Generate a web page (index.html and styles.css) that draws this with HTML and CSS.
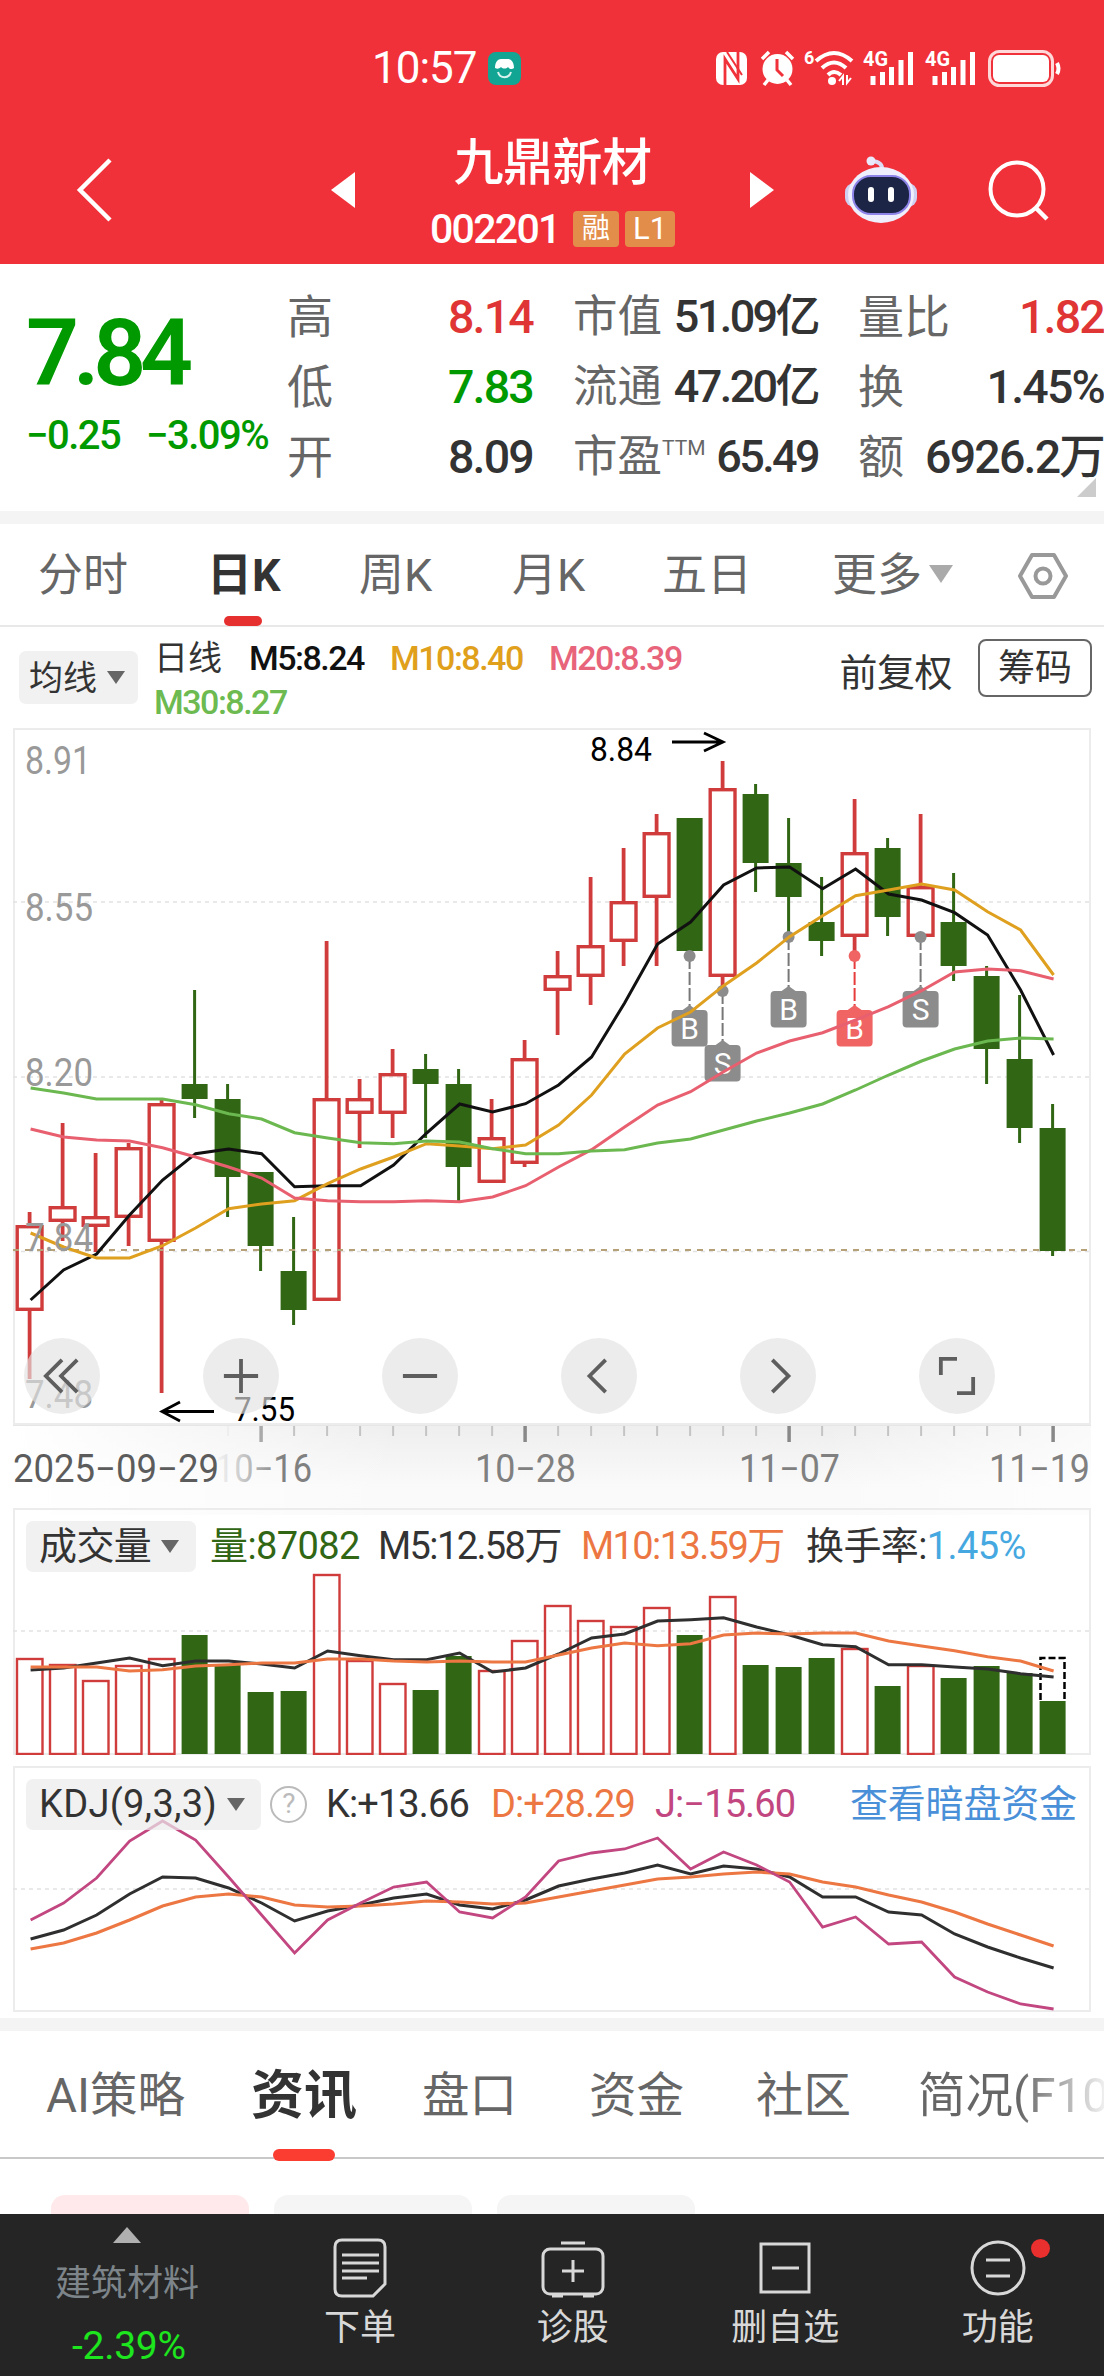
FILE: index.html
```html
<!DOCTYPE html>
<html lang="zh-CN">
  <head>
    <meta charset="UTF-8" />
    <meta name="viewport" content="width=device-width, initial-scale=1.0" />
    <title>九鼎新材 002201</title>
    <link rel="stylesheet" href="styles.css">
  </head>
  <body>
    <div class="app">
      <header class="header">
        <div class="status-bar">
          <span class="clock">10:57</span>
          <svg class="status-app" width="33" height="33" viewBox="0 0 33 33">
            <rect width="33" height="33" rx="8" fill="#12a594" />
            <path d="M7 16c0-6 3-9 6-9h7c3 0 6 3 6 9-2 2-5 1-6-1-2 2-5 2-7 0-2 2-4 2-6 1z" fill="#fff" />
            <path d="M10 20c2 7 11 7 13 0" fill="none" stroke="#d9f4ef" stroke-width="2" />
          </svg>
          <svg class="status-icons" width="346" height="42" viewBox="715 46 346 42">
            <!-- NFC -->
            <rect x="716" y="51" width="31" height="33" rx="7" fill="#fff" />
            <path d="M725 84V58l13 20V51" fill="none" stroke="#f13139" stroke-width="2.800" />
            <path d="M727 51l15 23" stroke="#f13139" stroke-width="2" />
            <!-- alarm -->
            <circle cx="777.500" cy="68" r="15" fill="#fff" />
            <path d="M762 58l7-7M793 58l-7-7M768 79l-4 5M787 79l4 5" stroke="#fff" stroke-width="3.500" />
            <path d="M777 58v11l6 6" fill="none" stroke="#f13139" stroke-width="3" />
            <!-- wifi -->
            <text x="804" y="63" class="tiny" font-size="18">6</text>
            <path d="M816 60q18-16 36 0M822 67q12-11 24 0M828 74q6-6 13 0" fill="none" stroke="#fff" stroke-width="4" />
            <circle cx="832" cy="80" r="4" fill="#fff" />
            <path d="M839 80l4-5v9M851 77l-4 5v-8" fill="none" stroke="#fff" stroke-width="2" />
            <!-- signal -->
            <text x="863" y="65" class="tiny" font-size="20" textLength="25" lengthAdjust="spacingAndGlyphs">4G</text>
            <path d="M873 75v9M882.500 71v13M891.500 66v18M901 59v25M910.500 51v33" stroke="#fff" stroke-width="5" />
            <text x="925" y="65" class="tiny" font-size="20" textLength="25" lengthAdjust="spacingAndGlyphs">4G</text>
            <path d="M935 75v9M944.500 71v13M953.500 66v18M963 59v25M972.500 51v33" stroke="#fff" stroke-width="5" />
            <!-- battery -->
            <rect x="989.500" y="50.500" width="63" height="34" rx="10" fill="none" stroke="#ffd9da" stroke-width="3" />
            <rect x="993" y="54" width="56" height="27" rx="6" fill="#fff" />
            <path d="M1057 62q3 5.500 0 11" fill="none" stroke="#fff" stroke-width="4" />
          </svg>
        </div>
        <div class="nav-bar">
          <svg class="nav-back" width="40" height="68" viewBox="0 0 40 68">
            <path d="M35 4L5 34l30 30" fill="none" stroke="#fff" stroke-width="4.500" />
          </svg>
          <svg class="nav-prev" width="24" height="36" viewBox="0 0 24 36"><path d="M24 0v36L0 18z" fill="#fff" /></svg>
          <div class="stock">
            <div class="stock-name">九鼎新材</div>
            <div class="stock-code">
              <span class="code">002201</span><span class="tag tag-rong">融</span><span class="tag tag-level">L1</span>
            </div>
          </div>
          <svg class="nav-next" width="24" height="36" viewBox="0 0 24 36"><path d="M0 0v36l24-18z" fill="#fff" /></svg>
          <svg class="nav-robot" width="74" height="68" viewBox="0 0 74 68">
            <path d="M38 14q1-8-10-9" fill="none" stroke="#dcdcf5" stroke-width="4" />
            <circle cx="27" cy="5" r="4.500" fill="#e9e9fb" />
            <rect x="1" y="27" width="72" height="24" rx="9" fill="#cfcff2" />
            <ellipse cx="37" cy="39" rx="33" ry="28" fill="#eeeefc" />
            <rect x="9" y="20" width="57" height="38" rx="18" fill="#1d2547" stroke="#8d83e8" stroke-width="2" />
            <rect x="24" y="31" width="6" height="15" rx="3" fill="#fff" />
            <rect x="44" y="31" width="6" height="15" rx="3" fill="#fff" />
          </svg>
          <svg class="nav-search" width="62" height="62" viewBox="0 0 62 62">
            <circle cx="29" cy="30" r="26.500" fill="none" stroke="#fff" stroke-width="4" />
            <path d="M48 49l11 11" stroke="#fff" stroke-width="4.500" />
          </svg>
        </div>
      </header>

      <section class="quote">
        <div class="price-box">
          <div class="price">7.84</div>
          <div class="change"><span>−0.25</span><span>−3.09%</span></div>
        </div>
        <div class="stats">
          <div class="stat"><label>高</label><b class="up">8.14</b></div>
          <div class="stat tight"><label>市值</label><b>51.09亿</b></div>
          <div class="stat"><label>量比</label><b class="up">1.82</b></div>
          <div class="stat"><label>低</label><b class="down">7.83</b></div>
          <div class="stat tight"><label>流通</label><b>47.20亿</b></div>
          <div class="stat"><label>换</label><b>1.45%</b></div>
          <div class="stat"><label>开</label><b>8.09</b></div>
          <div class="stat tight"><label>市盈<sup>TTM</sup></label><b>65.49</b></div>
          <div class="stat"><label>额</label><b>6926.2万</b></div>
        </div>
        <i class="corner"></i>
      </section>

      <nav class="period-tabs">
        <span>分时</span>
        <span class="active">日K</span>
        <span>周K</span>
        <span>月K</span>
        <span>五日</span>
        <span>更多<i class="caret caret-light"></i></span>
        <svg width="50" height="48" viewBox="0 0 50 48">
          <path d="M14 3h22l12 21-12 21H14L2 24z" fill="none" stroke="#999" stroke-width="4" stroke-linejoin="round" />
          <circle cx="25" cy="24" r="7.500" fill="none" stroke="#999" stroke-width="4" />
        </svg>
      </nav>

      <div class="ma-row">
        <span class="pill ma-pill">均线<i class="caret"></i></span>
        <div class="ma-values">
          <span class="ma-title">日线</span>
          <span class="ma5">M5:8.24</span>
          <span class="ma10">M10:8.40</span>
          <span class="ma20">M20:8.39</span>
          <span class="ma30">M30:8.27</span>
        </div>
        <span class="adjust">前复权</span>
        <span class="chips-btn">筹码</span>
      </div>

      <div class="panel kline">
        <svg id="kline" width="1078" height="697" viewBox="13 728 1078 697"></svg>
        <div class="chart-tools">
          <span><svg viewBox="0 0 40 40"><path d="M20 3L3 20l17 17M36 3L19 20l17 17" /></svg></span>
          <span><svg viewBox="0 0 40 40"><path d="M20 2v36M2 20h36" /></svg></span>
          <span><svg viewBox="0 0 40 40"><path d="M2 20h36" /></svg></span>
          <span><svg viewBox="0 0 40 40"><path d="M27 3L10 20l17 17" /></svg></span>
          <span><svg viewBox="0 0 40 40"><path d="M14 3l17 17-17 17" /></svg></span>
          <span><svg viewBox="0 0 40 40"><path d="M3 19V2h17M37 21v17H20" /></svg></span>
        </div>
      </div>
      <div class="axis">
        <svg id="axis" width="1078" height="90" viewBox="13 1425 1078 90"></svg>
      </div>

      <div class="panel volume">
        <svg id="volume" width="1078" height="247" viewBox="13 1508 1078 247"></svg>
        <div class="legend vol-legend">
          <span class="pill">成交量<i class="caret"></i></span>
          <span class="vol">量:87082</span>
          <span class="narrow">M5:12.58万</span>
          <span class="orange narrow">M10:13.59万</span>
          <span>换手率:<em>1.45%</em></span>
        </div>
      </div>

      <div class="panel kdj">
        <svg id="kdj" width="1078" height="246" viewBox="13 1766 1078 246"></svg>
        <div class="legend kdj-legend">
          <span class="pill">KDJ(9,3,3)<i class="caret"></i></span>
          <span class="help">?</span>
          <span>K:+13.66</span>
          <span class="orange">D:+28.29</span>
          <span class="purple">J:−15.60</span>
          <a class="dark-link">查看暗盘资金</a>
        </div>
      </div>

      <nav class="info-tabs">
        <span>AI策略</span>
        <span class="active">资讯</span>
        <span>盘口</span>
        <span>资金</span>
        <span>社区</span>
        <span class="faded">简况(F10)</span>
      </nav>
      <div class="chips"><i class="on"></i><i></i><i></i></div>

      <footer class="bottom-bar">
        <div class="sector">
          <i class="caret-up"></i>
          <span class="sector-name">建筑材料</span>
          <span class="sector-change">-2.39%</span>
        </div>
        <div class="action">
          <svg width="66" height="60" viewBox="0 0 66 60">
            <path d="M15 2h36q7 0 7 7v37L46 58H15q-7 0-7-7V9q0-7 7-7z" />
            <path d="M15 17h37M15 25h37M15 33h37M15 40h25" />
          </svg>
          <span>下单</span>
        </div>
        <div class="action">
          <svg width="66" height="60" viewBox="0 0 66 60">
            <rect x="3" y="11" width="60" height="45" rx="7" />
            <path d="M21 5h24M22 33h22M33 22v22M12 58h11M43 58h11" />
          </svg>
          <span>诊股</span>
        </div>
        <div class="action">
          <svg width="66" height="60" viewBox="0 0 66 60">
            <rect x="9" y="6" width="48" height="48" />
            <path d="M20 30h27" />
          </svg>
          <span>删自选</span>
        </div>
        <div class="action">
          <svg width="66" height="60" viewBox="0 0 66 60">
            <circle cx="33" cy="30" r="26" />
            <path d="M21 22h24M21 38h24" />
          </svg>
          <span>功能</span>
          <i class="badge"></i>
        </div>
      </footer>
    </div>
    <script src="chart.js"></script>
  </body>
</html>
```

FILE: styles.css
```css
* {
  box-sizing: border-box;
}

body {
  margin: 0;
  background: #fff;
  color: #333;
  font-family: Roboto, "Noto Sans CJK SC", sans-serif;
}

i,
em,
b {
  font-style: normal;
}

svg {
  display: block;
  flex: none;
}

.app {
  position: relative;
  width: 1104px;
  height: 2376px;
  overflow: hidden;
  display: flex;
  flex-direction: column;
}

.app > * {
  flex: none;
}

/* header */
.header {
  height: 264px;
  background: #f13139;
  color: #fff;
}

.status-bar {
  display: flex;
  align-items: center;
  height: 102px;
  padding: 34px 43px 0 372px;
}

.clock {
  width: 116px;
  font-size: 44px;
  font-weight: 400;
  letter-spacing: -1px;
}

.status-icons {
  margin-left: auto;
}

.tiny {
  fill: #fff;
  font-weight: 700;
}

.nav-bar {
  display: flex;
  align-items: center;
  height: 162px;
  padding: 14px 54px 0 75px;
}

.nav-prev {
  margin-left: 216px;
}

.stock {
  width: 395px;
  height: 148px;
  padding-top: 11px;
  text-align: center;
}

.stock-name {
  font-size: 50px;
  font-weight: 500;
  line-height: 72px;
  letter-spacing: -0.5px;
}

.stock-code {
  display: flex;
  align-items: center;
  height: 60px;
  padding-left: 75px;
}

.code {
  width: 143px;
  text-align: left;
  font-size: 41px;
  font-weight: 500;
  letter-spacing: -1.7px;
}

.tag {
  height: 36px;
  line-height: 36px;
  border-radius: 4px;
  background: #e38d4a;
  font-size: 28px;
}

.tag-rong {
  width: 46px;
}

.tag-level {
  width: 50px;
  margin-left: 6px;
  font-size: 31px;
}

.nav-robot {
  margin-left: 70px;
}

.nav-search {
  margin-left: auto;
}

/* quote */
.quote {
  position: relative;
  display: flex;
  height: 260px;
  padding-top: 18px;
  border-bottom: 13px solid #f4f4f4;
}

.price-box {
  width: 287px;
  padding-left: 26px;
  color: #009900;
  font-weight: 500;
}

.price {
  margin-top: 22px;
  font-size: 93px;
  font-weight: 600;
  line-height: 100px;
  letter-spacing: -6.2px;
}

.change {
  display: flex;
  margin-top: 6px;
  font-size: 40px;
  line-height: 52px;
  letter-spacing: -1.5px;
}

.change span:first-child {
  width: 120px;
}

.stats {
  display: grid;
  grid-template-columns: 246px 245px 246px;
  grid-auto-rows: 70px;
  column-gap: 40px;
}

.stat {
  display: flex;
  justify-content: space-between;
  line-height: 70px;
  white-space: nowrap;
}

.stat label {
  color: #666;
  font-size: 46px;
}

.stat b {
  font-size: 46.5px;
  font-weight: 500;
  letter-spacing: -1.8px;
}

.tight label {
  font-size: 44.5px;
}

.tight b {
  font-size: 45px;
  letter-spacing: -2.6px;
}

.stat sup {
  position: relative;
  top: -17px;
  font-size: 21px;
  line-height: 0;
  vertical-align: baseline;
}

.stat .up {
  color: #e03535;
}

.stat .down {
  color: #009900;
}

.corner {
  position: absolute;
  right: 8px;
  bottom: 14px;
  border-left: 19px solid transparent;
  border-bottom: 19px solid #ccc;
}

/* period tabs */
.period-tabs {
  display: grid;
  grid-template-columns: 169px 152px 153px 150px 170px 186px 50px;
  align-items: center;
  height: 103px;
  padding: 0 0 0 38px;
  border-bottom: 2px solid #e8e8e8;
  color: #666;
  font-size: 45px;
  line-height: 104px;
}

.period-tabs .active {
  position: relative;
  color: #333;
  font-weight: 700;
}

.period-tabs .active::after {
  content: "";
  position: absolute;
  left: 17px;
  bottom: 2px;
  width: 38px;
  height: 10px;
  border-radius: 5px;
  background: #e63030;
}

.caret {
  display: inline-block;
  margin-left: 10px;
  border: 9px solid transparent;
  border-top: 13px solid #666;
  border-bottom: 0;
  vertical-align: 6px;
}

.caret-light {
  margin-left: 7px;
  border-width: 12px;
  border-top: 18px solid #aaa;
  border-bottom: 0;
  vertical-align: 8px;
}

/* moving averages */
.ma-row {
  display: flex;
  height: 101px;
  padding: 9px 12px 0 19px;
}

.pill {
  border-radius: 7px;
  background: rgba(235, 235, 235, 0.7);
  color: #333;
  white-space: nowrap;
}

.ma-pill {
  width: 119px;
  height: 53px;
  margin-top: 15px;
  padding-left: 10px;
  font-size: 34px;
  line-height: 54px;
}

.ma-values {
  display: grid;
  grid-template-columns: 95px 141px 159px 140px;
  grid-auto-rows: 44px;
  width: 535px;
  margin-left: 16px;
  font-size: 34px;
  font-weight: 500;
  line-height: 45px;
  letter-spacing: -1.5px;
}

.ma-title {
  font-weight: 400;
  letter-spacing: 0;
}

.ma5 {
  color: #111;
}

.ma10 {
  color: #e0a01c;
}

.ma20 {
  color: #e8647a;
}

.ma30 {
  color: #6cba50;
}

.adjust {
  margin: 9px 0 0 auto;
  font-size: 38px;
  line-height: 56px;
  letter-spacing: -0.5px;
}

.chips-btn {
  width: 114px;
  height: 58px;
  margin: 3px 0 0 26px;
  border: 2px solid #666;
  border-radius: 8px;
  font-size: 37px;
  line-height: 55px;
  text-align: center;
}

/* charts */
.panel {
  position: relative;
  width: 1078px;
  margin-left: 13px;
}

.panel::before {
  content: "";
  position: absolute;
  inset: 0;
  border: 2px solid #ececec;
}

.panel > svg {
  position: absolute;
  left: 0;
  top: 0;
}

.kline {
  height: 697px;
}

.chart-tools {
  position: absolute;
  left: 11px;
  top: 610px;
  display: flex;
  gap: 103px;
}

.chart-tools span {
  width: 76px;
  height: 76px;
  padding: 19px;
  border-radius: 50%;
  background: rgba(226, 226, 226, 0.65);
}

.chart-tools path {
  fill: none;
  stroke: #5e5e5e;
  stroke-width: 4;
}

.axis {
  height: 83px;
}

.axis svg {
  margin-left: 13px;
  background: linear-gradient(90deg, #fff, rgba(255, 255, 255, 0) 36%, rgba(255, 255, 255, 0) 75%, rgba(255, 255, 255, 0.7)),
    linear-gradient(#eee, #fafafa 70%);
}

.volume {
  height: 247px;
}

.kdj {
  height: 246px;
  margin-top: 11px;
}

.legend {
  position: relative;
  display: grid;
  align-items: center;
  padding: 13px 0 0 13px;
  font-size: 38px;
  line-height: 51px;
  white-space: nowrap;
}

.legend .pill {
  padding-left: 13px;
}

.vol-legend {
  grid-template-columns: 184px 168px 203px 225px 240px;
  letter-spacing: -0.6px;
}

.vol-legend .pill,
.kdj-legend .pill {
  margin-right: 14px;
}

.vol-legend .narrow {
  letter-spacing: -1.6px;
}

.vol {
  color: #306614;
}

.legend em {
  color: #45a8e0;
}

.legend .orange {
  color: #ed7743;
}

.legend .purple {
  color: #c24781;
}

.kdj-legend {
  grid-template-columns: 244px 56px 165px 164px 195px 240px;
  letter-spacing: -0.9px;
}

.kdj-legend .pill {
  margin-right: 9px;
  letter-spacing: 0.3px;
}

.help {
  width: 37px;
  height: 37px;
  border: 2.5px solid #bbb;
  border-radius: 50%;
  color: #bbb;
  font-size: 28px;
  line-height: 32px;
  text-align: center;
}

.legend .dark-link {
  color: #4a90d9;
  letter-spacing: -0.2px;
}

.price-label {
  fill: #999;
  font-size: 38px;
}

.mark-label {
  font-size: 34px;
}

.date-label {
  fill: #808080;
  font-size: 38px;
}

/* info tabs */
.info-tabs {
  display: grid;
  grid-template-columns: 205px 171px 167px 167px 162px 200px;
  height: 141px;
  margin-top: 6px;
  padding-left: 46px;
  border-top: 13px solid #f4f4f4;
  border-bottom: 2px solid #c8c8c8;
  color: #666;
  font-size: 47.5px;
  line-height: 131px;
  white-space: nowrap;
}

.info-tabs .active {
  position: relative;
  color: #333;
  font-size: 53px;
  font-weight: 700;
}

.info-tabs .active::after {
  content: "";
  position: absolute;
  left: 22px;
  bottom: 1px;
  width: 62px;
  height: 12px;
  border-radius: 6px;
  background: #fb3c31;
}

.faded {
  background: linear-gradient(90deg, #666 50%, rgba(102, 102, 102, 0) 98%);
  -webkit-background-clip: text;
  background-clip: text;
  color: transparent;
}

.chips {
  display: flex;
  gap: 25px;
  height: 55px;
  padding: 36px 0 0 51px;
}

.chips i {
  width: 198px;
  border-radius: 14px 14px 0 0;
  background: #f5f5f5;
}

.chips .on {
  background: #ffe9ea;
}

/* bottom bar */
.bottom-bar {
  display: flex;
  height: 162px;
  background: #252525;
  color: #d8d8d8;
  font-size: 36px;
}

.sector {
  display: flex;
  flex-direction: column;
  align-items: center;
  width: 254px;
  padding-top: 13px;
}

.caret-up {
  border: 14px solid transparent;
  border-top: 0;
  border-bottom: 16px solid #b0b0b0;
}

.sector-name {
  margin-top: 17px;
  color: #7d858b;
  line-height: 48px;
}

.sector-change {
  margin-top: 14px;
  padding-left: 4px;
  color: #1ee61e;
  font-size: 39px;
  line-height: 48px;
  letter-spacing: -0.3px;
}

.action {
  position: relative;
  display: flex;
  flex-direction: column;
  align-items: center;
  width: 212.7px;
  padding-top: 24px;
  line-height: 61px;
}

.action path,
.action rect,
.action circle {
  fill: none;
  stroke: #d8d8d8;
  stroke-width: 3;
}

.badge {
  position: absolute;
  left: 140px;
  top: 25px;
  width: 19px;
  height: 19px;
  border-radius: 50%;
  background: #ea2f2f;
}
```

FILE: chart.js
```javascript
const STEP = 33;
const FIRST = 29.6;
const RED = "#d03c3c";
const GREEN = "#306614";

const x = (i) => FIRST + i * STEP;

// [up, high, top, bottom, low]
const candles = [
  [1, 1212, 1225, 1311, 1379],
  [1, 1123, 1206, 1222, 1241],
  [1, 1153, 1216, 1227, 1252],
  [1, 1143, 1147, 1218, 1246],
  [1, 1100, 1103, 1242, 1393],
  [0, 990, 1084, 1099, 1118],
  [0, 1084, 1099, 1177, 1217],
  [0, 1172, 1172, 1246, 1271],
  [0, 1217, 1271, 1310, 1325],
  [1, 941, 1098, 1301, 1301],
  [1, 1079, 1098, 1114, 1148],
  [1, 1049, 1073, 1114, 1138],
  [0, 1054, 1069, 1084, 1138],
  [0, 1069, 1084, 1167, 1201],
  [1, 1099, 1137, 1183, 1183],
  [1, 1040, 1058, 1164, 1167],
  [1, 951, 975, 991, 1035],
  [1, 877, 945, 977, 1005],
  [1, 848, 901, 942, 966],
  [1, 814, 832, 898, 966],
  [0, 818, 818, 951, 956],
  [1, 761, 788, 977, 989],
  [0, 784, 794, 863, 892],
  [0, 818, 863, 897, 936],
  [0, 877, 922, 941, 956],
  [1, 799, 852, 937, 956],
  [0, 838, 848, 917, 936],
  [1, 814, 886, 937, 937],
  [0, 873, 922, 966, 981],
  [0, 966, 976, 1049, 1084],
  [0, 995, 1059, 1128, 1143],
  [0, 1104, 1128, 1251, 1256],
];

const ma5 = [1300, 1270, 1254, 1215, 1180, 1153.7, 1149, 1153.7, 1186.7, 1185.7, 1185.7, 1165, 1133, 1104, 1112, 1103.7, 1085, 1057, 1003, 944, 922, 885, 868, 867, 888.7, 869, 894, 900, 912.7, 935, 990, 1055];
const ma10 = [1233, 1247, 1258, 1258, 1245.7, 1228, 1208.7, 1204, 1200.7, 1183.7, 1169, 1157, 1143.7, 1146, 1148.7, 1145, 1125, 1095, 1054, 1028, 1012, 985.7, 963, 936.7, 915.7, 895.7, 890, 884, 890, 911.7, 930, 975];
const ma20 = [1129, 1137, 1140, 1141, 1147.7, 1157, 1167, 1178, 1198, 1200.7, 1201.7, 1201.7, 1200.7, 1201.7, 1197, 1185.7, 1167, 1149.7, 1127, 1105, 1091.7, 1071.7, 1053, 1041, 1032.7, 1020, 1006.7, 990.7, 972, 969, 970.7, 979];
const ma30 = [1088, 1093, 1099, 1099, 1099, 1104.7, 1113.7, 1119, 1132.7, 1138, 1142.7, 1143.7, 1141, 1142, 1148.7, 1153.7, 1153.7, 1151, 1149.7, 1143, 1139, 1130, 1121, 1113, 1104, 1090, 1075, 1061, 1049, 1041, 1038, 1039];

// [index, y, letter, color]
const trades = [
  [20, 956, "B", "#8c8c8c"],
  [21, 991, "S", "#8c8c8c"],
  [23, 937, "B", "#8c8c8c"],
  [25, 956, "B", "#f06464"],
  [27, 937, "S", "#8c8c8c"],
];

const volumes = [1658, 1664, 1680, 1665, 1658, 1635, 1665, 1692, 1691, 1574, 1660, 1683, 1690, 1656, 1670, 1640, 1605, 1620, 1626, 1607, 1635, 1596, 1665, 1667, 1658, 1648, 1686, 1665, 1678, 1666, 1673, 1701];
const vol5 = [1670, 1668, 1663, 1658, 1665.7, 1661, 1661, 1664, 1668, 1651, 1655.7, 1659.7, 1659.7, 1653, 1672, 1668, 1654, 1638, 1634, 1621, 1619.7, 1617.7, 1627, 1635, 1644.7, 1646.7, 1664.7, 1664.7, 1667, 1669, 1673.7, 1677];
const vol10 = [1667, 1667, 1667, 1671, 1669.7, 1666, 1664.7, 1663, 1663, 1659, 1659, 1661, 1662, 1661, 1662, 1662, 1655, 1648, 1643, 1645.7, 1643.7, 1635, 1633, 1634, 1633, 1633, 1641, 1646, 1650.7, 1656.7, 1661, 1671];

const kLine = [1939, 1930, 1915, 1894, 1877, 1878, 1888, 1903, 1921, 1911, 1905, 1898, 1894, 1905, 1909, 1900, 1886, 1879, 1873, 1865, 1874, 1866, 1869, 1877, 1897, 1897, 1912, 1915, 1934, 1947, 1958, 1968];
const dLine = [1949, 1943, 1933, 1920, 1906, 1897, 1894, 1897, 1905, 1907, 1906, 1904, 1901, 1902, 1904, 1903, 1897, 1891, 1885, 1879, 1877, 1874, 1872, 1874, 1882, 1887, 1895, 1902, 1912, 1924, 1935, 1946];
const jLine = [1920, 1903, 1878, 1841, 1821, 1840, 1877, 1915, 1953, 1920, 1903, 1887, 1882, 1912, 1918, 1897, 1861, 1853, 1849, 1838, 1869, 1852, 1865, 1882, 1927, 1917, 1944, 1942, 1977, 1992, 2004, 2009];

function line(values, color, width = 3) {
  const points = values.map((y, i) => `${x(i) + 1},${y}`).join(" ");
  return `<polyline points="${points}" fill="none" stroke="${color}" stroke-width="${width}" />`;
}

function segment(x1, y1, x2, y2, color, width, extra = "") {
  return `<line x1="${x1}" y1="${y1}" x2="${x2}" y2="${y2}" stroke="${color}" stroke-width="${width}" ${extra} />`;
}

function grid(y) {
  return segment(13, y, 1091, y, "#e2e2e2", 1.5, 'stroke-dasharray="4 4"');
}

function text(content, left, baseline, width, cls, extra = "") {
  return `<text x="${left}" y="${baseline}" textLength="${width}" lengthAdjust="spacingAndGlyphs" class="${cls}" ${extra}>${content}</text>`;
}

function drawCandle([up, high, top, bottom, low], i) {
  const cx = x(i);
  if (up) {
    return (
      segment(cx, high, cx, top, RED, 3.8) +
      segment(cx, bottom, cx, low, RED, 3.8) +
      `<rect x="${cx - 12.4}" y="${top + 1.7}" width="24.8" height="${bottom - top - 3.4}" fill="none" stroke="${RED}" stroke-width="3.400" />`
    );
  }
  return (
    segment(cx, high, cx, low, GREEN, 3) +
    `<rect x="${cx - 13}" y="${top}" width="26" height="${bottom - top}" fill="${GREEN}" />`
  );
}

function drawTrade([i, y, letter, color]) {
  const cx = x(i);
  return (
    segment(cx, y, cx, y + 50, color === "#8c8c8c" ? "#777" : "#e63c3c", 2, 'stroke-dasharray="13 3"') +
    `<circle cx="${cx}" cy="${y}" r="6" fill="${color}" />` +
    `<path d="M${cx - 7} ${y + 54}l7-5 7 5z" fill="${color}" />` +
    `<rect x="${cx - 18}" y="${y + 54}" width="36" height="36.5" rx="4" fill="${color}" />` +
    `<text x="${cx}" y="${y + 83}" fill="#fff" font-size="30" text-anchor="middle">${letter}</text>`
  );
}

function drawKline() {
  let html = grid(902) + grid(1077) + grid(1251.5);
  html += candles.map(drawCandle).join("");
  html += segment(13, 1250, 1039, 1250, "#b5a077", 1.8, 'stroke-dasharray="6 6"');
  html += segment(1069, 1250, 1091, 1250, "#b5a077", 1.8, 'stroke-dasharray="6 6"');
  html += trades.map(drawTrade).join("");
  html += line(ma5, "#111") + line(ma10, "#dfa01f") + line(ma20, "#e8606f") + line(ma30, "#6cb850");
  html += text("8.91", 25, 774, 66, "price-label");
  html += text("8.55", 25, 921, 68, "price-label");
  html += text("8.20", 25, 1086, 68, "price-label");
  html += text("7.84", 25, 1251, 68, "price-label");
  html += text("7.48", 25, 1408, 68, "price-label");
  html += text("8.84", 590, 761, 62, "mark-label");
  html += text("7.55", 234, 1421, 61, "mark-label");
  html += '<path d="M672 742h49M704 733l19 9-19 9M214 1411.500h-51M180 1402l-18 9.500 18 9.500" fill="none" stroke="#000" stroke-width="2.800" />';
  document.getElementById("kline").innerHTML = html;
}

function drawAxis() {
  let html = segment(13, 1425.5, 1091, 1425.5, "#e6e6e6", 1);
  for (let i = 6; i < 32; i++) {
    const major = i % 8 === 7;
    const color = i === 6 ? "#eee" : major ? (i === 7 ? "#aaa" : "#888") : "#c4c4c4";
    html += segment(x(i) + 0.5, 1426, x(i) + 0.5, major ? 1442 : 1436, color, major ? 3.5 : 2);
  }
  // the first date runs into the next label, so that one fades in
  html += '<defs><linearGradient id="fade"><stop offset="0" stop-color="#808080" stop-opacity="0" /><stop offset="0.7" stop-color="#808080" /></linearGradient></defs>';
  html += text("2025−09−29", 13, 1482, 206, "date-label", 'style="fill: #5c5c5c"');
  html += text("10−16", 215, 1482, 97, "date-label", 'style="fill: url(#fade)"');
  html += text("10−28", 475, 1482, 101, "date-label");
  html += text("11−07", 739, 1482, 101, "date-label");
  html += text("11−19", 989, 1482, 101, "date-label");
  document.getElementById("axis").innerHTML = html;
}

function drawVolume() {
  let html = grid(1631);
  volumes.forEach((top, i) => {
    const cx = x(i);
    if (candles[i][0]) {
      html += `<rect x="${cx - 12.6}" y="${top + 1}" width="25.500" height="${1753 - top}" fill="none" stroke="${RED}" stroke-width="2.400" />`;
    } else {
      html += `<rect x="${cx - 13}" y="${top}" width="26" height="${1754 - top}" fill="${GREEN}" />`;
    }
  });
  html += '<path d="M1040.500 1700v-42h24v42" fill="none" stroke="#000" stroke-width="2.500" stroke-dasharray="7 3" />';
  html += line(vol5, "#2f2f2f") + line(vol10, "#ed7743");
  document.getElementById("volume").innerHTML = html;
}

function drawKdj() {
  document.getElementById("kdj").innerHTML =
    grid(1889) + line(kLine, "#2f2f2f") + line(dLine, "#ed7743", 3.2) + line(jLine, "#c24781", 2.8);
}

drawKline();
drawAxis();
drawVolume();
drawKdj();
```
